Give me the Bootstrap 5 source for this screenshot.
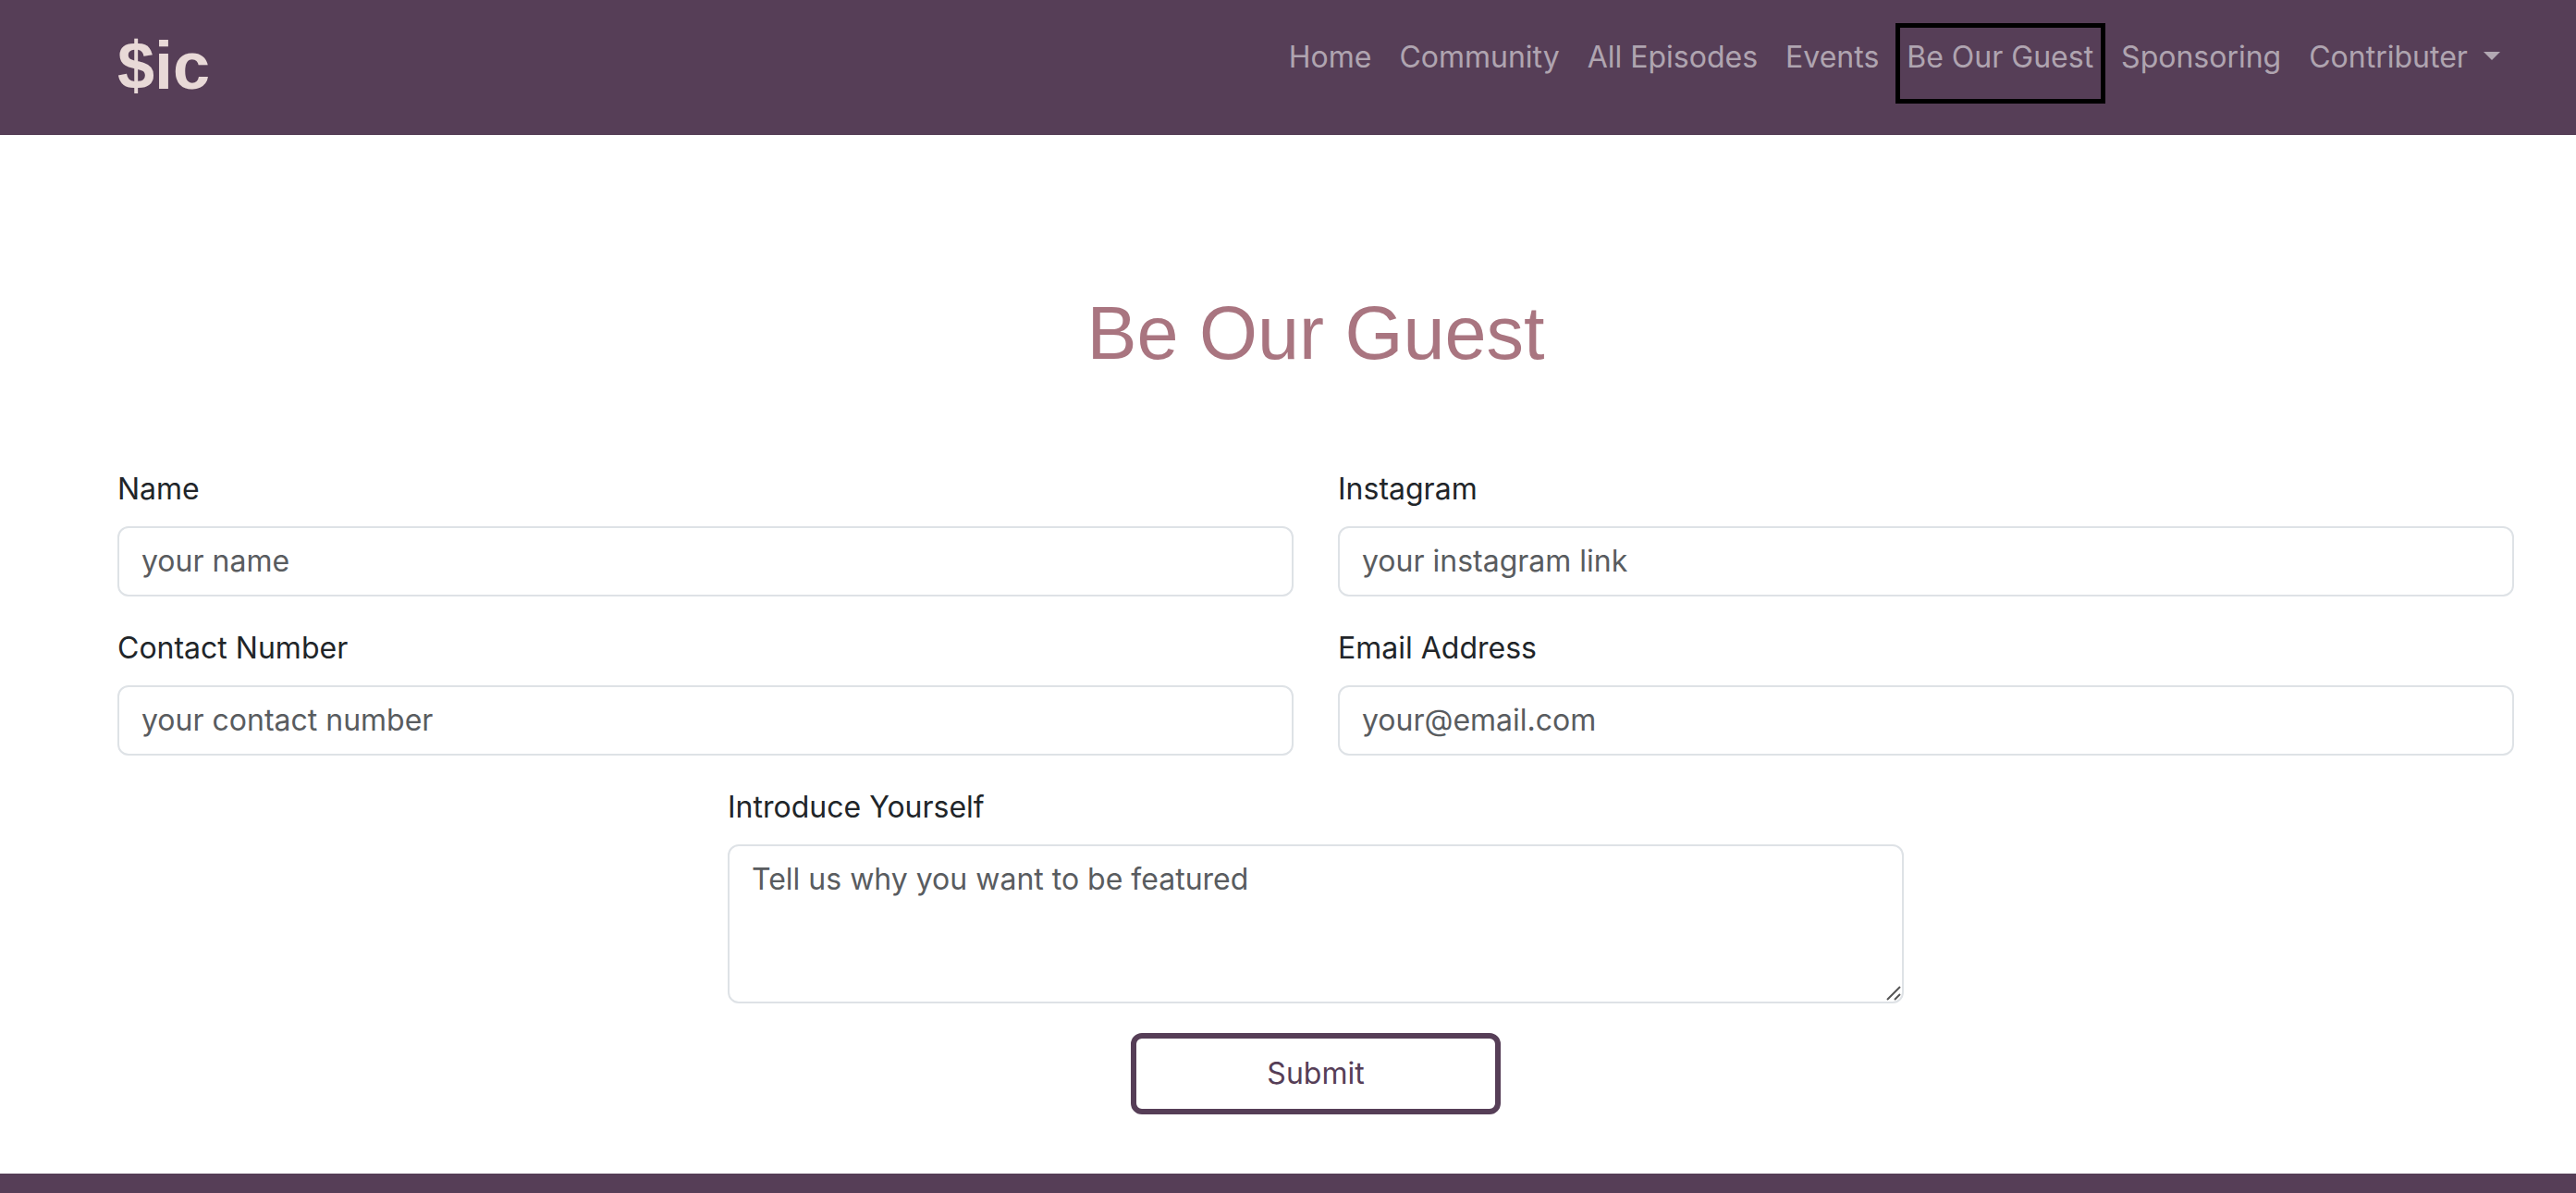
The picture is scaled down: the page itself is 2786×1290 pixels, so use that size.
<!DOCTYPE html>
<html lang="en">
<head>
<meta charset="utf-8">
<meta name="viewport" content="width=device-width, initial-scale=1">
<title>$ic - Be Our Guest</title>
<link href="https://cdn.jsdelivr.net/npm/bootstrap@5.3.0/dist/css/bootstrap.min.css" rel="stylesheet">
<style>
  :root { --plum: #563e57; --rose: #a97580; --blush: #e8d9d7; }
  html { font-size: 32px; }
  body { font-family: Inter, sans-serif; color: #212529; background: #fff; }
  .site-bar { background: var(--plum); padding: 17px 67px 21px 127px; }
  .site-bar .navbar-brand { font: 700 72px/108px "Liberation Sans", sans-serif; color: var(--blush); }
  .site-bar .navbar-nav { --bs-navbar-nav-link-padding-x: 15px; }
  .site-bar .nav-link { color: rgba(255, 255, 255, .55); }
  .site-bar .navbar-collapse { padding-top: 5px; }
  .nav-current { position: relative; }
  .nav-current::after { content: ""; position: absolute; inset: 3px 2px -10px 3px; border: 5px solid #000; pointer-events: none; }
  .guest-main { padding: 166px 67px 64px 127px; }
  .guest-title { font: 400 81px/97px "Liberation Sans", sans-serif; color: var(--rose); margin-bottom: 96px; }
  .form-label { margin-bottom: 16px; }
  .form-control { border: 2px solid #dee2e6; border-radius: 12px; }
  .form-control::placeholder { color: #595c5f; opacity: 1; }
  textarea.form-control { resize: none; display: block; }
  .grip { right: 3px; bottom: 3px; width: 16px; height: 16px; }
  .btn-plum { width: 400px; max-width: 100%; padding: 14px 24px; border: 6px solid var(--plum); border-radius: 12px; color: var(--plum); background: #fff; }
  .btn-plum:hover { background: var(--plum); color: #fff; }
  .site-foot { background: var(--plum); }
</style>
<script src="https://cdn.jsdelivr.net/npm/bootstrap@5.3.0/dist/js/bootstrap.bundle.min.js" defer></script>
</head>
<body class="d-flex flex-column min-vh-100">
<nav class="navbar navbar-expand-lg site-bar">
  <a class="navbar-brand p-0" href="#">$ic</a>
  <div class="navbar-collapse align-self-start">
    <ul class="navbar-nav ms-auto">
      <li class="nav-item"><a class="nav-link" href="#">Home</a></li>
      <li class="nav-item"><a class="nav-link" href="#">Community</a></li>
      <li class="nav-item"><a class="nav-link" href="#">All Episodes</a></li>
      <li class="nav-item"><a class="nav-link" href="#">Events</a></li>
      <li class="nav-item"><a class="nav-link nav-current" href="#" aria-current="page">Be Our Guest</a></li>
      <li class="nav-item"><a class="nav-link" href="#">Sponsoring</a></li>
      <li class="nav-item dropdown">
        <a class="nav-link dropdown-toggle" href="#" role="button" data-bs-toggle="dropdown" aria-expanded="false">Contributer </a>
      </li>
    </ul>
  </div>
</nav>
<main class="guest-main">
  <h1 class="guest-title text-center">Be Our Guest</h1>
  <form class="row gy-3 justify-content-center">
    <div class="col-md-6">
      <label class="form-label" for="name">Name</label>
      <input class="form-control" type="text" id="name" placeholder="your name">
    </div>
    <div class="col-md-6">
      <label class="form-label" for="instagram">Instagram</label>
      <input class="form-control" type="text" id="instagram" placeholder="your instagram link">
    </div>
    <div class="col-md-6">
      <label class="form-label" for="phone">Contact Number</label>
      <input class="form-control" type="tel" id="phone" placeholder="your contact number">
    </div>
    <div class="col-md-6">
      <label class="form-label" for="email">Email Address</label>
      <input class="form-control" type="email" id="email" placeholder="your@email.com">
    </div>
    <div class="w-100 m-0"></div>
    <div class="col-md-6">
      <label class="form-label" for="intro">Introduce Yourself</label>
      <div class="position-relative">
        <textarea class="form-control" id="intro" rows="3" placeholder="Tell us why you want to be featured"></textarea>
        <svg class="grip position-absolute" viewBox="0 0 16 16" fill="none" stroke="#555" stroke-width="2" aria-hidden="true"><path d="M1 15 15 1M9 15l6-6"/></svg>
      </div>
    </div>
    <div class="col-12 text-center">
      <button class="btn btn-plum" type="submit">Submit</button>
    </div>
  </form>
</main>
<footer class="site-foot flex-grow-1"></footer>
</body>
</html>
